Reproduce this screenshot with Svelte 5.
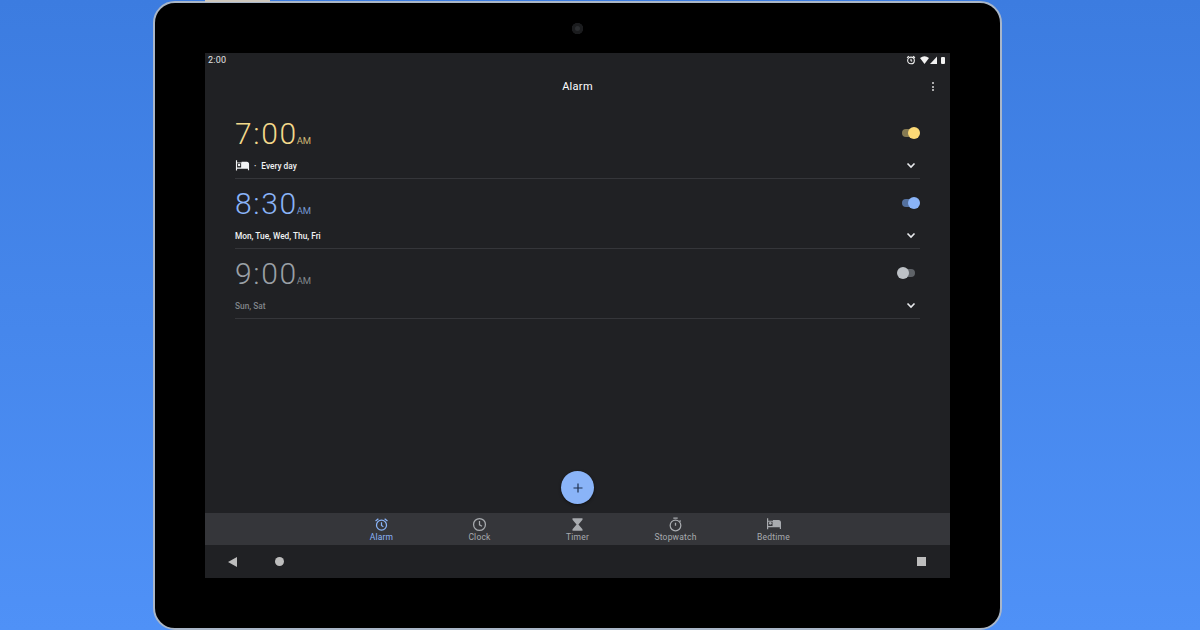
<script>
	const alarms = [
		{ time: '7:00', days: 'Every day', tone: 'yellow', on: true, bed: true },
		{ time: '8:30', days: 'Mon, Tue, Wed, Thu, Fri', tone: 'blue', on: true, bed: false },
		{ time: '9:00', days: 'Sun, Sat', tone: 'grey', on: false, bed: false }
	];
	const tabs = [
		{ name: 'Alarm', icon: 'alarm', active: true },
		{ name: 'Clock', icon: 'clock' },
		{ name: 'Timer', icon: 'timer' },
		{ name: 'Stopwatch', icon: 'stopwatch' },
		{ name: 'Bedtime', icon: 'bed' }
	];
</script>

{#snippet bedIcon(size)}
	<svg width={size} height={size} viewBox="0 0 24 24" fill="currentColor">
		<path fill-rule="evenodd" d="M1.500 3.500h1.800v3.500H10.500V6H19c2 0 3.500 1.500 3.500 3.500v10h-1.800v-2.500H3.300v3H1.500zM3.300 8.500v6.500H9.800V8.500z" />
		<circle cx="6.500" cy="11" r="2" />
	</svg>
{/snippet}

{#snippet tabIcon(name)}
	{#if name === 'alarm'}
		<svg width="15" height="15" viewBox="0 0 24 24" fill="none" stroke="currentColor" stroke-width="2">
			<circle cx="12" cy="13" r="8" />
			<path d="M12 8.500V13.500l3 2M2.500 6.500 7 2.800M21.500 6.500 17 2.800" />
		</svg>
	{:else if name === 'clock'}
		<svg width="15" height="15" viewBox="0 0 24 24" fill="none" stroke="currentColor" stroke-width="2">
			<circle cx="12" cy="12" r="9.500" />
			<path d="M12 6.500V12.500l4 2.400" />
		</svg>
	{:else if name === 'timer'}
		<svg width="15" height="15" viewBox="0 0 24 24" fill="currentColor">
			<path d="M4 2h16v2.500l-6.500 7.500 6.500 7.500V22H4v-2.500l6.500-7.500L4 4.500z" />
		</svg>
	{:else if name === 'stopwatch'}
		<svg width="15" height="15" viewBox="0 0 24 24" fill="none" stroke="currentColor" stroke-width="2">
			<circle cx="12" cy="13.500" r="8.500" />
			<path d="M8.500 1.800h7M12 9v5M18.500 5.500l1.800 1.800" />
		</svg>
	{:else}
		{@render bedIcon(16)}
	{/if}
{/snippet}

<div class="page">
	<div class="tablet">
		<span class="topKey"></span>
		<div class="cameraRow"><span class="camera"></span></div>
		<div class="screen">
			<div class="status">
				<span>2:00</span>
				<div class="statusIcons">
					<svg width="10" height="10" viewBox="0 0 24 24" fill="none" stroke="currentColor" stroke-width="2.600">
						<circle cx="12" cy="13" r="8" />
						<path d="M12 9v4.500l3 1.500M2.500 6.500 7 2.800M21.500 6.500 17 2.800" />
					</svg>
					<svg class="wifi" width="9" height="8" viewBox="0 0 18 16" fill="currentColor"><path d="M0 4Q9-3 18 4L9 16z" /></svg>
					<svg width="7" height="8" viewBox="0 0 14 16" fill="currentColor"><path d="M14 1V16H0z" /></svg>
					<span class="battery"></span>
				</div>
			</div>

			<header class="top">
				<span class="title">Alarm</span>
				<span class="more"><i></i><i></i><i></i></span>
			</header>

			<main class="list">
				{#each alarms as alarm}
					<div class="alarm {alarm.tone}">
						<div class="line">
							<div class="time">{alarm.time}<small>AM</small></div>
							<span class="switch" class:on={alarm.on}><span class="knob"></span></span>
						</div>
						<div class="line lower">
							<div class="days">
								{#if alarm.bed}
									<span class="bed">{@render bedIcon(15)}</span>
									<span class="dot">·</span>
								{/if}
								<span>{alarm.days}</span>
							</div>
							<svg class="chev" width="10" height="7" viewBox="0 0 10 7" fill="none" stroke="currentColor" stroke-width="1.600"><path d="M1.500 1.500 5 5l3.500-3.500" /></svg>
						</div>
					</div>
				{/each}
				<button class="fab" aria-label="Add alarm">
					<svg width="10" height="10" viewBox="0 0 10 10" fill="none" stroke="#1d2f4d" stroke-width="1.200"><path d="M5 .5v9M.5 5h9" /></svg>
				</button>
			</main>

			<nav class="tabs">
				{#each tabs as tab}
					<div class="tab" class:active={tab.active}>
						<span class="tabIcon">{@render tabIcon(tab.icon)}</span>
						<span>{tab.name}</span>
					</div>
				{/each}
			</nav>

			<div class="system">
				<div class="leftKeys">
					<span class="back"></span>
					<span class="home"></span>
				</div>
				<span class="recent"></span>
			</div>
		</div>
	</div>
</div>

<style>
	:global(body) {
		margin: 0;
	}

	.page {
		width: 1200px;
		height: 630px;
		overflow: hidden;
		display: flex;
		justify-content: flex-start;
		background: linear-gradient(180deg, #3c7ce0 0%, #4f91f7 100%);
		font-family: Roboto, 'Liberation Sans', sans-serif;
	}

	.tablet {
		position: relative;
		box-sizing: border-box;
		width: 849px;
		height: 629px;
		margin: 1px 0 0 153px;
		padding: 0 50px;
		background: #000;
		border: 2px solid #a9b6c8;
		border-radius: 22px;
		display: flex;
		flex-direction: column;
	}

	.topKey {
		position: absolute;
		top: -3px;
		left: 50px;
		width: 65px;
		height: 2px;
		background: #cfc8bd;
	}

	.cameraRow {
		height: 50px;
		display: flex;
		justify-content: center;
		align-items: center;
		flex: none;
	}

	.camera {
		width: 11px;
		height: 11px;
		border-radius: 50%;
		background: #2b2d30;
		box-shadow: inset 0 0 0 3px #1b1c1e;
	}

	.screen {
		height: 525px;
		background: #202124;
		display: flex;
		flex-direction: column;
		color: #fff;
	}

	.status {
		height: 14px;
		flex: none;
		padding: 0 5px 0 3px;
		display: flex;
		justify-content: space-between;
		align-items: center;
		font-size: 9px;
		color: #e4e4e4;
		letter-spacing: 0.2px;
	}

	.statusIcons {
		display: flex;
		align-items: center;
		gap: 1px;
		color: #f2f2f2;
	}

	.wifi {
		margin-left: 3px;
	}

	.battery {
		width: 4px;
		height: 7px;
		margin-left: 3px;
		background: #f2f2f2;
		border-radius: 1px;
	}

	.top {
		position: relative;
		flex: none;
		height: 38px;
		display: flex;
		justify-content: center;
		align-items: center;
	}

	.title {
		font-size: 11px;
		font-weight: 400;
		letter-spacing: 0.3px;
	}

	.more {
		position: absolute;
		right: 16px;
		top: 15px;
		display: flex;
		flex-direction: column;
		gap: 1.500px;
	}

	.more i {
		width: 2px;
		height: 2px;
		background: #d8d8d8;
		border-radius: 50%;
	}

	.list {
		position: relative;
		flex: 1;
		padding: 4px 30px 0;
	}

	.alarm {
		box-sizing: border-box;
		height: 70px;
		border-bottom: 1px solid #35363a;
		display: flex;
		flex-direction: column;
	}

	.line {
		display: flex;
		justify-content: space-between;
		align-items: center;
		height: 50px;
	}

	.lower {
		height: 17px;
		margin-top: -2px;
	}

	.time {
		font-size: 30px;
		font-weight: 300;
		letter-spacing: 1.600px;
		line-height: 40px;
		margin-top: 6px;
	}

	.time small {
		font-size: 9.500px;
		font-weight: 400;
		letter-spacing: 0;
		margin-left: -1px;
		opacity: 0.8;
	}

	.yellow .time {
		color: #f3d98b;
	}

	.blue .time {
		color: #8ab4f8;
	}

	.grey .time {
		color: #9aa0a6;
	}

	.days {
		display: flex;
		align-items: center;
		gap: 4px;
		font-size: 8.300px;
		font-weight: 500;
		color: #f1f3f4;
	}

	.grey .days {
		color: #80868b;
	}

	.bed {
		display: flex;
		color: #f1f3f4;
	}

	.dot {
		margin: 0 1px 0 0;
	}

	.chev {
		color: #e8eaed;
		margin-right: 4px;
	}

	.switch {
		position: relative;
		width: 15px;
		height: 8px;
		border-radius: 4px;
		background: #5f6368;
		margin-top: -3px;
		margin-right: 3px;
	}

	.switch:not(.on) {
		margin-right: 5px;
	}

	.knob {
		position: absolute;
		top: -2px;
		left: -3px;
		width: 12px;
		height: 12px;
		border-radius: 50%;
		background: #bdc1c6;
	}

	.switch.on .knob {
		left: auto;
		right: -3px;
	}

	.yellow .switch {
		background: #857a52;
	}

	.yellow .knob {
		background: #fbd976;
	}

	.blue .switch {
		background: #54719f;
	}

	.blue .knob {
		background: #8ab4f8;
	}

	.fab {
		position: absolute;
		left: 356px;
		bottom: 9px;
		width: 33px;
		height: 33px;
		padding: 0;
		border: 0;
		border-radius: 50%;
		background: #8ab4f8;
		box-shadow: 0 1px 3px rgba(0, 0, 0, 0.5);
		display: flex;
		align-items: center;
		justify-content: center;
	}

	.tabs {
		flex: none;
		height: 32px;
		background: #35363a;
		display: flex;
		justify-content: center;
	}

	.tab {
		width: 98px;
		display: flex;
		flex-direction: column;
		align-items: center;
		font-size: 8.500px;
		color: #a8abaf;
		letter-spacing: 0.2px;
		line-height: 10px;
	}

	.tabIcon {
		height: 16px;
		margin-top: 3px;
		display: flex;
		align-items: center;
	}

	.tab.active {
		color: #8ab4f8;
	}

	.system {
		flex: none;
		height: 33px;
		padding: 0 24px 0 23px;
		display: flex;
		justify-content: space-between;
		align-items: center;
	}

	.leftKeys {
		display: flex;
		align-items: center;
		gap: 38px;
	}

	.back {
		width: 0;
		height: 0;
		border-style: solid;
		border-width: 5px 9px 5px 0;
		border-color: transparent #bdbdbd transparent transparent;
	}

	.home {
		width: 9px;
		height: 9px;
		border-radius: 50%;
		background: #bdbdbd;
	}

	.recent {
		width: 9px;
		height: 9px;
		background: #bdbdbd;
	}
</style>
